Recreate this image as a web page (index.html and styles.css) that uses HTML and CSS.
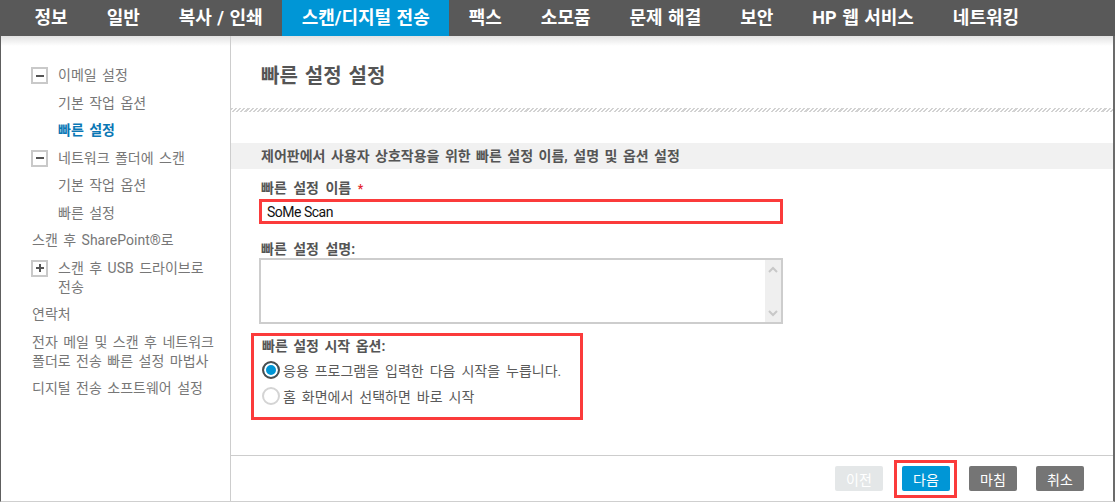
FILE: index.html
```html
<!DOCTYPE html>
<html lang="ko">

<head>
  <meta charset="UTF-8" />
  <meta name="viewport" content="width=device-width, initial-scale=1.0" />
  <title>빠른 설정 설정</title>
  <link rel="stylesheet" href="styles.css">
</head>

<body>
  <div class="frame">
    <!-- Top Navigation -->
    <nav class="topnav">
      <a href="#">정보</a>
      <a href="#">일반</a>
      <a href="#">복사 / 인쇄</a>
      <a href="#" class="active">스캔/디지털 전송</a>
      <a href="#">팩스</a>
      <a href="#">소모품</a>
      <a href="#">문제 해결</a>
      <a href="#">보안</a>
      <a href="#">HP 웹 서비스</a>
      <a href="#">네트워킹</a>
    </nav>

    <div class="workspace">
      <!-- Side Menu -->
      <aside class="sidebar">
        <ul class="menu">
          <li class="menu-group"><span class="toggle minus"></span><span>이메일 설정</span></li>
          <li class="menu-sub">기본 작업 옵션</li>
          <li class="menu-sub current">빠른 설정</li>
          <li class="menu-group"><span class="toggle minus"></span><span>네트워크 폴더에 스캔</span></li>
          <li class="menu-sub">기본 작업 옵션</li>
          <li class="menu-sub">빠른 설정</li>
          <li>스캔 후 SharePoint®로</li>
          <li class="menu-group"><span class="toggle plus"></span><span>스캔 후 USB 드라이브로<br>전송</span></li>
          <li>연락처</li>
          <li>전자 메일 및 스캔 후 네트워크<br>폴더로 전송 빠른 설정 마법사</li>
          <li>디지털 전송 소프트웨어 설정</li>
        </ul>
      </aside>

      <!-- Main Panel -->
      <main class="main">
        <div class="main-body">
          <h1 class="page-title">빠른 설정 설정</h1>
          <div class="hatch"></div>
          <div class="section-bar">제어판에서 사용자 상호작용을 위한 빠른 설정 이름, 설명 및 옵션 설정</div>

          <div class="form">
            <div class="field-label first">빠른 설정 이름 <span class="required">*</span></div>
            <input type="text" class="name-input" value="SoMe Scan" />

            <div class="field-label">빠른 설정 설명:</div>
            <div class="textbox">
              <div class="scrollbar">
                <svg width="10" height="7" viewBox="0 0 10 7"><path d="M1 6 L5 2 L9 6" fill="none" stroke="#c8c8c8" stroke-width="2"/></svg>
                <svg width="10" height="7" viewBox="0 0 10 7"><path d="M1 1 L5 5 L9 1" fill="none" stroke="#c8c8c8" stroke-width="2"/></svg>
              </div>
            </div>

            <div class="options">
              <div class="options-title">빠른 설정 시작 옵션:</div>
              <label class="radio-row first"><span class="radio on"></span>응용 프로그램을 입력한 다음 시작을 누릅니다.</label>
              <label class="radio-row"><span class="radio"></span>홈 화면에서 선택하면 바로 시작</label>
            </div>
          </div>
        </div>

        <!-- Wizard Buttons -->
        <div class="actions">
          <button class="btn btn-prev">이전</button>
          <span class="next-wrap"><button class="btn btn-next">다음</button></span>
          <button class="btn btn-gray">마침</button>
          <button class="btn btn-gray">취소</button>
        </div>
      </main>
    </div>
  </div>
</body>

</html>
```

FILE: styles.css
```css
/* General Styles */
body {
  margin: 0;
  padding: 0;
  font-family: Roboto, "Noto Sans CJK KR", sans-serif;
  background-color: #fff;
}

.frame {
  width: 1115px;
  height: 502px;
  display: flex;
  flex-direction: column;
}

/* Top Navigation */
.topnav {
  height: 36px;
  flex: none;
  display: flex;
  padding-left: 15px;
  background-color: #595959;
}

.topnav a {
  padding: 0 19.5px;
  line-height: 36px;
  font-size: 18px;
  font-weight: bold;
  color: #fff;
  text-decoration: none;
  word-spacing: 1px;
  white-space: nowrap;
}

.topnav a.active {
  background-color: #0096d6;
}

/* Workspace */
.workspace {
  flex: 1;
  min-height: 0;
  display: flex;
  border-left: 1px solid #5e5e5e;
  border-right: 2px solid #6b6b6b;
  border-bottom: 1px solid #cfcfcf;
  background: linear-gradient(#e2e2e2, #fff 10px);
}

/* Side Menu */
.sidebar {
  width: 230px;
  flex: none;
  box-sizing: border-box;
  padding: 30px 4px 0 30px;
  border-right: 1px solid #cdcdcd;
}

.menu {
  list-style: none;
  margin: 0;
  padding: 0;
  font-size: 14px;
  line-height: 19px;
  color: #777;
  word-spacing: 2px;
  white-space: nowrap;
}

.menu li {
  margin-bottom: 8.5px;
  padding-left: 1px;
}

.menu-group {
  display: flex;
  align-items: flex-start;
}

.menu-sub {
  padding-left: 27px !important;
}

.menu-sub.current {
  color: #0a77b5;
  font-weight: bold;
}

.toggle {
  position: relative;
  width: 17px;
  height: 17px;
  flex: none;
  box-sizing: border-box;
  margin: 1px 10px 0 -1px;
  border: 2px solid #c9c9c9;
}

.toggle::before,
.toggle.plus::after {
  content: "";
  position: absolute;
  left: 2.5px;
  top: 5.5px;
  width: 8px;
  height: 2px;
  background-color: #555;
}

.toggle.plus::after {
  transform: rotate(90deg);
}

/* Main Panel */
.main {
  flex: 1;
  min-width: 0;
  display: flex;
  flex-direction: column;
}

.main-body {
  flex: 1;
}

.page-title {
  margin: 0;
  padding: 28px 30px 0;
  font-size: 20px;
  line-height: 24px;
  font-weight: bold;
  color: #555;
  word-spacing: 2px;
}

.hatch {
  margin-top: 20px;
  height: 4px;
  background: repeating-linear-gradient(135deg, #d2d2d2 0 1.5px, #fff 1.5px 3px);
}

.section-bar {
  margin-top: 31px;
  padding: 0 30px;
  line-height: 26px;
  font-size: 14px;
  font-weight: bold;
  color: #555;
  background-color: #f1f1f1;
  word-spacing: 2px;
}

.form {
  padding: 0 30px;
}

.field-label {
  margin-top: 16px;
  line-height: 18px;
  font-size: 14px;
  font-weight: bold;
  color: #555;
  word-spacing: 3px;
}

.field-label.first {
  margin-top: 10px;
}

.required {
  color: #e4232b;
  font-size: 12px;
}

.name-input {
  display: block;
  margin: 1px 0 0 -2px;
  width: 524px;
  height: 25px;
  box-sizing: border-box;
  padding: 0 5px;
  border: 3px solid #fb3b3b;
  font-family: Roboto, sans-serif;
  font-size: 14px;
  letter-spacing: -0.5px;
  color: #111;
  outline: none;
}

.textbox {
  margin-left: -2px;
  width: 524px;
  height: 66px;
  box-sizing: border-box;
  border: 2px solid #cdcdcd;
  display: flex;
  justify-content: flex-end;
}

.scrollbar {
  width: 16px;
  background-color: #efefef;
  display: flex;
  flex-direction: column;
  align-items: center;
  justify-content: space-between;
  padding: 6px 0 5px;
  box-sizing: border-box;
}

/* Start options */
.options {
  margin: 9px 0 0 -10px;
  width: 332px;
  box-sizing: border-box;
  padding: 0 8px 8px;
  border: 3px solid #fb3b3b;
}

.options-title {
  line-height: 20px;
  font-size: 14px;
  font-weight: bold;
  color: #555;
  word-spacing: 2px;
}

.radio-row {
  display: flex;
  align-items: center;
  height: 26px;
  font-size: 14px;
  color: #5a5a5a;
  word-spacing: 2.5px;
  white-space: nowrap;
}

.radio-row.first {
  margin-top: 1px;
}

.radio {
  width: 18px;
  height: 18px;
  flex: none;
  box-sizing: border-box;
  margin-right: 3px;
  border: 2px solid #d4d4d4;
  border-radius: 50%;
  background-color: #fff;
}

.radio.on {
  border-color: #4d4d4d;
  background-color: #0096d6;
  box-shadow: inset 0 0 0 2px #fff;
}

/* Wizard Buttons */
.actions {
  height: 46px;
  flex: none;
  box-sizing: border-box;
  display: flex;
  justify-content: flex-end;
  align-items: flex-start;
  gap: 19px;
  padding: 10px 29px 0 0;
  border-top: 1px solid #cdcdcd;
}

.btn {
  width: 48px;
  height: 25px;
  padding: 0;
  border: none;
  border-radius: 2px;
  font-family: "Noto Sans CJK KR", sans-serif;
  font-size: 14px;
  color: #fff;
}

.btn-prev {
  background-color: #e4e7e8;
}

.btn-next {
  background-color: #0096d6;
}

.btn-gray {
  background-color: #757575;
}

.next-wrap {
  position: relative;
  display: block;
  height: 25px;
}

.next-wrap::after {
  content: "";
  position: absolute;
  top: -6px;
  right: -7px;
  bottom: -7px;
  left: -8px;
  border: 3px solid #fb3b3b;
}
```
